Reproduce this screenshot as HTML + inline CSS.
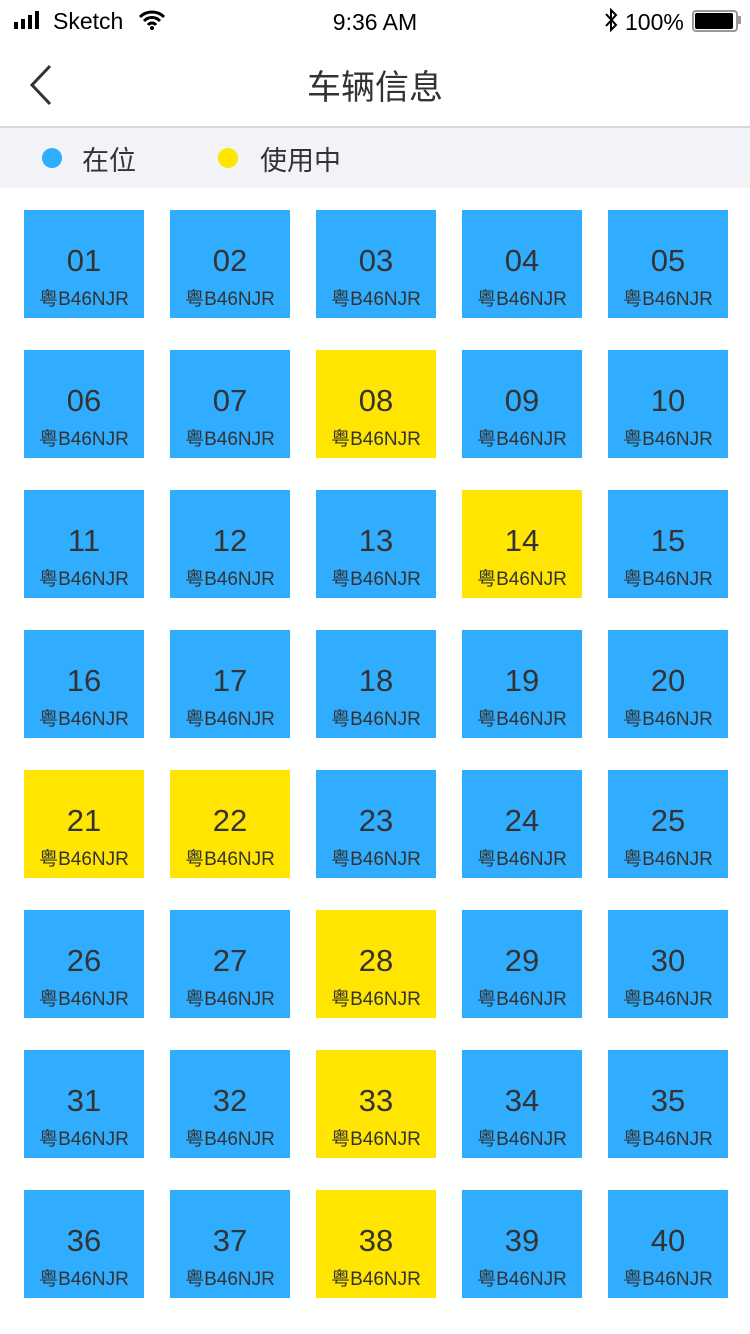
<!DOCTYPE html>
<html><head><meta charset="utf-8"><style>
body{margin:0;width:750px;height:1334px;background:#fff;position:relative;overflow:hidden;font-family:"Liberation Sans","Noto Sans CJK SC",sans-serif;color:#333}
.a{position:absolute}
.t{position:absolute;width:120px;height:108px;background:#30adfe;text-align:center}
.t.y{background:#ffe500}
.n{position:absolute;left:0;right:0;top:33px;font-size:31px;line-height:36px;color:#333}
.p{position:absolute;left:0;right:0;top:79px;font-size:19px;line-height:22px;color:#333}
</style></head><body>
<div class="a" style="left:14px;top:11px;display:flex;align-items:flex-end;gap:3px">
<div style="width:4px;height:7px;background:#000"></div><div style="width:4px;height:10px;background:#000"></div><div style="width:4px;height:14px;background:#000"></div><div style="width:4px;height:18px;background:#000"></div></div>
<div class="a" style="left:53px;top:8px;font-size:23px;color:#000">Sketch</div>
<svg class="a" style="left:139px;top:10px" width="26" height="20" viewBox="0 0 26 20"><path d="M1 7a17 17 0 0 1 24 0M5 11a11 11 0 0 1 16 0M9 15a5 5 0 0 1 8 0" stroke="#000" stroke-width="3" fill="none"/><circle cx="13" cy="18" r="2" fill="#000"/></svg>
<div class="a" style="left:0;width:750px;top:9px;text-align:center;font-size:23px;color:#000">9:36 AM</div>
<svg class="a" style="left:603px;top:8px" width="16" height="24" viewBox="0 0 16 24"><path d="M3 6l10 11-5 5V2l5 5L3 18" stroke="#000" stroke-width="2" fill="none"/></svg>
<div class="a" style="left:625px;top:9px;font-size:23px;color:#000">100%</div>
<div class="a" style="left:692px;top:10px;width:42px;height:18px;border:2px solid #999;border-radius:4px"></div>
<div class="a" style="left:695px;top:13px;width:38px;height:16px;background:#000;border-radius:2px"></div>
<div class="a" style="left:738px;top:16px;width:3px;height:8px;background:#999"></div>
<svg class="a" style="left:28px;top:64px" width="26" height="42" viewBox="0 0 26 42"><path d="M22 2L4 21l18 19" stroke="#333" stroke-width="3" fill="none"/></svg>
<div class="a" style="left:0;width:750px;top:60px;text-align:center;font-size:34px;color:#333">车辆信息</div>
<div class="a" style="left:0;top:126px;width:750px;height:2px;background:#d8d8dc"></div>
<div class="a" style="left:0;top:128px;width:750px;height:60px;background:#f2f3f7"></div>
<div class="a" style="left:42px;top:148px;width:20px;height:20px;border-radius:50%;background:#30adfe"></div>
<div class="a" style="left:82px;top:139px;font-size:27px">在位</div>
<div class="a" style="left:218px;top:148px;width:20px;height:20px;border-radius:50%;background:#ffe500"></div>
<div class="a" style="left:260px;top:139px;font-size:27px">使用中</div>
<div id="g"></div>
<script>
var y=[8,14,21,22,28,33,38],h='';
for(var i=0;i<40;i++){var r=Math.floor(i/5),c=i%5,n=i+1;
h+='<div class="t'+(y.indexOf(n)>=0?' y':'')+'" style="left:'+(24+c*146)+'px;top:'+(210+r*140)+'px"><div class="n">'+(n<10?'0'+n:n)+'</div><div class="p">粤B46NJR</div></div>';}
document.getElementById('g').innerHTML=h;
</script>
</body></html>
